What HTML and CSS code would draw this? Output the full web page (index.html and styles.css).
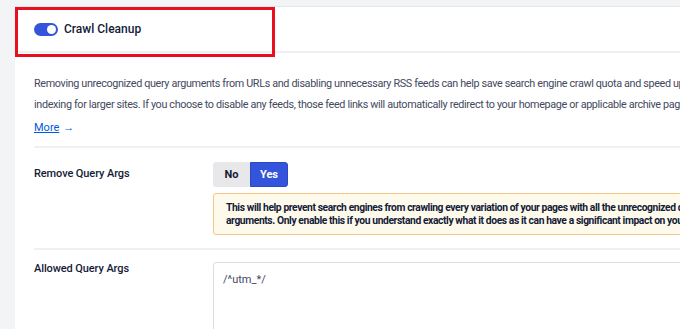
FILE: index.html
```html
<!DOCTYPE html>
<html lang="en">
<head>
  <meta charset="UTF-8">
  <meta name="viewport" content="width=device-width, initial-scale=1">
  <title>Crawl Cleanup</title>
  <link rel="stylesheet" href="styles.css">
</head>
<body>
  <div class="page">
    <div class="card">
      <div class="card-header">
        <span class="toggle"><span class="knob"></span></span>
        <h2>Crawl Cleanup</h2>
        <div class="highlight"></div>
      </div>
      <div class="card-body">
        <p class="desc">Removing unrecognized query arguments from URLs and disabling unnecessary RSS feeds can help save search engine crawl quota and speed up indexing for larger sites. If you choose to disable any feeds, those feed links will automatically redirect to your homepage or applicable archive page.</p>
        <a class="more" href="#">More</a> <span class="arrow">&rarr;</span>

        <div class="row">
          <div class="label">Remove Query Args</div>
          <div class="field">
            <div class="radio-group">
              <button class="btn-no">No</button>
              <button class="btn-yes">Yes</button>
            </div>
            <div class="alert">This will help prevent search engines from crawling every variation of your pages with all the unrecognized query arguments. Only enable this if you understand exactly what it does as it can have a significant impact on your site.</div>
          </div>
        </div>

        <div class="row">
          <div class="label">Allowed Query Args</div>
          <div class="field">
            <div class="textarea">/^utm_*/</div>
          </div>
        </div>
      </div>
    </div>
  </div>
</body>
</html>
```

FILE: styles.css
```css
:root { --navy: #141b38; --text: #434960; --blue: #3455db; --line: #f0f0f1; }
* { box-sizing: border-box; }
html, body { margin: 0; padding: 0; }
body { background: #f3f4f5; font-family: Roboto, "Noto Sans", sans-serif; color: var(--navy);
  overflow: hidden; width: 680px; height: 329px; }
.page { padding: 7px 0 0 15px; }
.card { background: #fff; width: 820px; min-height: 400px; box-shadow: 0 -1px 0 #e6e7ea; }
.card-header { position: relative; height: 46px; display: flex; align-items: center;
  padding-left: 19px; border-bottom: 2px solid var(--line); }
.card-header h2 { margin: 0 0 0 6px; font-size: 12px; font-weight: 500; color: var(--navy); }
.toggle { width: 24px; height: 13px; border-radius: 7px; background: var(--blue);
  display: flex; align-items: center; justify-content: flex-end; padding-right: 2px; }
.knob { width: 9px; height: 9px; border-radius: 50%; background: #fff; }
.highlight { position: absolute; left: 0; top: 0; width: 260px; height: 50px;
  border: 3px solid #e8101f; }
.card-body { padding: 0 0 0 19px; }
.desc { margin: 0; padding-top: 20px; width: 675px; font-size: 10.8px; line-height: 21px;
  letter-spacing: -0.35px; color: var(--text); }
.more { display: inline-block; margin-top: 3px; font-size: 11px; line-height: 20px;
  color: #005ae0; text-decoration: underline; }
.arrow { font-size: 11px; color: #005ae0; }
.row { display: flex; border-top: 2px solid var(--line); margin-top: 8px; padding-top: 14px; }
.row + .row { margin-top: 0; padding-top: 12px; }
.label { width: 179px; flex: none; font-size: 11px; font-weight: 500; letter-spacing: -0.1px;
  color: var(--navy); padding-top: 5px; }
.row + .row .label { padding-top: 0; }
.field { flex: 1; }
.radio-group { display: flex; }
.radio-group button { height: 25px; border: 1px solid transparent; font-family: inherit;
  font-size: 11px; font-weight: 700; padding: 0; }
.btn-no { width: 37px; background: #e8e8eb; color: var(--navy); border-radius: 3px 0 0 3px; }
.btn-yes { width: 38px; background: var(--blue); color: #fff; border-color: #2c48c4 !important;
  border-radius: 0 3px 3px 0; }
.alert { margin-top: 6px; margin-bottom: 13px; padding: 7px 12px; width: 520px; background: #fdfaeb;
  border: 1px solid #f5c685; border-radius: 3px; font-size: 10.3px; font-weight: 700;
  line-height: 13px; letter-spacing: -0.4px; color: var(--navy); }
.textarea { height: 100px; border: 1px solid #dcdde1; border-radius: 3px;
  padding: 10px 9px; font-size: 11px; color: var(--text); }
```
